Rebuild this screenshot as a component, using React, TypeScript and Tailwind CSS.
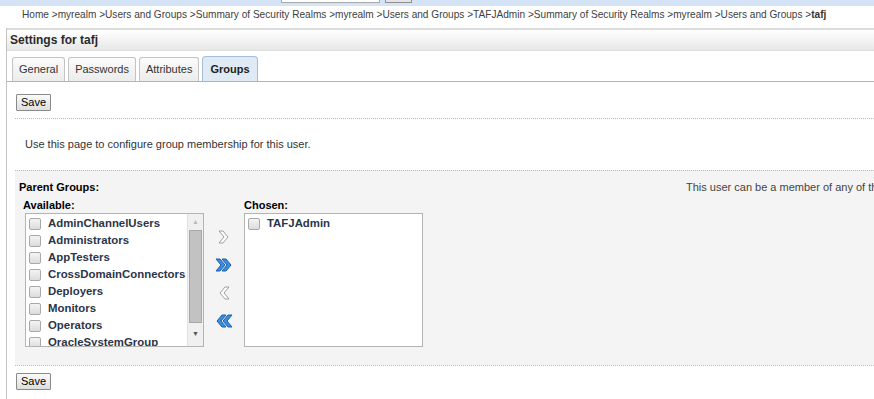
import React from 'react';

const available = [
  'AdminChannelUsers',
  'Administrators',
  'AppTesters',
  'CrossDomainConnectors',
  'Deployers',
  'Monitors',
  'Operators',
  'OracleSystemGroup',
];

const crumbs = [
  'Home', 'myrealm', 'Users and Groups', 'Summary of Security Realms', 'myrealm',
  'Users and Groups', 'TAFJAdmin', 'Summary of Security Realms', 'myrealm', 'Users and Groups',
];

const Check = () => (
  <span className="inline-block w-[12px] h-[12px] rounded-[2px] border border-[#a9a9a9] bg-gradient-to-b from-[#f4f4f4] to-[#dcdcdc] shrink-0" />
);

const Chevron = ({ dir, double }: { dir: 'r' | 'l'; double?: boolean }) => {
  const one = '1,1 5,1 10,7 5,13 1,13 6,7';
  const fill = double ? '#3a8ee0' : '#ffffff';
  const stroke = double ? '#1f5ea8' : '#a0a0a0';
  return (
    <svg width="18" height="14" viewBox="0 0 18 14" className={dir === 'l' ? 'scale-x-[-1]' : ''}>
      {double ? (
        <>
          <polygon points={one} fill={fill} stroke={stroke} strokeWidth="1" strokeLinejoin="round" />
          <polygon points={one} transform="translate(6,0)" fill={fill} stroke={stroke} strokeWidth="1" strokeLinejoin="round" />
        </>
      ) : (
        <polygon points={one} transform="translate(3,0)" fill={fill} stroke={stroke} strokeWidth="1" strokeLinejoin="round" />
      )}
    </svg>
  );
};

const SaveButton = () => (
  <button className="h-[17px] px-[4px] text-[11px] leading-none text-black border border-[#8a8a8a] bg-gradient-to-b from-[#fafafa] to-[#dedede] rounded-[1px]">
    Save
  </button>
);

export default function App() {
  return (
    <div className="w-[874px] h-[399px] overflow-hidden bg-white text-[#333] font-['Liberation_Sans',Arial,sans-serif]">
      {/* top strip */}
      <div className="h-[6px] bg-[#d4e3f5] flex items-start pl-[281px] gap-[5px]">
        <div className="w-[99px] h-[3px] bg-white border-x border-b border-[#a8a8a8]" />
        <div className="w-[27px] h-[3px] bg-[#e4e4e4] border-x border-b border-[#8f8f8f]" />
      </div>

      {/* breadcrumb */}
      <div className="h-[22px] pl-[22px] pt-[3px] text-[10.1px] leading-[12px] text-[#404040] whitespace-nowrap">
        {crumbs.map((c, i) => (
          <span key={i}>{i > 0 ? ' >' : ''}{c}</span>
        ))}
        <span> &gt;</span>
        <span className="font-bold text-[#333]">tafj</span>
      </div>

      <div className="ml-[6px] border-l border-[#c4c4c4] h-full">
        {/* header */}
        <div className="h-[23px] border-t-2 border-[#bfcad1] bg-gradient-to-b from-white to-[#e6e8e6] border-b border-[#dcdcdc] pl-[3px] flex items-center text-[12px] font-bold text-[#2a2a2a]">
          Settings for tafj
        </div>

        {/* tabs */}
        <div className="mt-[6px] pl-[5px] flex items-end gap-[3px] border-b border-[#9fb9d2] h-[25px]">
          {['General', 'Passwords', 'Attributes'].map((t) => (
            <div key={t} className="h-[24px] px-[6px] flex items-center text-[11px] text-[#333] border border-b-0 border-[#c4c4c4] rounded-t-[3px] bg-gradient-to-b from-[#fbfbfb] to-[#ececec]">
              {t}
            </div>
          ))}
          <div className="h-[25px] px-[7px] flex items-center text-[11px] font-bold text-[#222] border border-b-0 border-[#a3bfd8] rounded-t-[4px] bg-[#dfeaf4]">
            Groups
          </div>
        </div>

        <div className="flex pl-[9px] pt-[12px] pb-[7px]">
          <SaveButton />
        </div>
        <div className="ml-[8px] border-t border-dotted border-[#b8b8b8]" />

        <div className="pl-[18px] h-[51px] flex items-center text-[11px] text-[#333]">
          Use this page to configure group membership for this user.
        </div>

        <div className="ml-[8px] border-t border-dotted border-[#b8b8b8] bg-[#f4f4f4] h-[195px] pt-[9px] pl-[4px]">
          <div className="flex justify-between text-[11px] leading-[14px]">
            <span className="font-bold text-black">Parent Groups:</span>
            <span className="text-[#444] whitespace-nowrap w-[188px] overflow-hidden">This user can be a member of any of the groups listed</span>
          </div>

          <div className="flex mt-[4px]">
            <div className="pl-[4px]">
              <div className="text-[11px] font-bold text-black leading-[14px]">Available:</div>
              <div className="mt-[1px] ml-[2px] w-[179px] h-[134px] border border-[#b4b4b4] bg-white flex overflow-hidden">
                <div className="flex-1 pl-[3px] pt-[1px]">
                  {available.map((g) => (
                    <div key={g} className="h-[17px] flex items-center gap-[7px] text-[11.4px] font-bold text-[#2b3548] whitespace-nowrap">
                      <Check />
                      {g}
                    </div>
                  ))}
                </div>
                <div className="w-[16px] bg-[#f0f0f0] border-l border-[#e0e0e0] flex flex-col items-center">
                  <div className="h-[16px] flex items-center justify-center text-[7px] text-[#bbb]">▲</div>
                  <div className="w-[13px] h-[93px] bg-[#c2c2c2] border border-[#a8a8a8]" />
                  <div className="flex-1 flex items-center justify-center text-[7px] text-[#555]">▼</div>
                </div>
              </div>
            </div>

            <div className="w-[40px] pt-[32px] flex flex-col items-center gap-[14px]">
              <Chevron dir="r" />
              <Chevron dir="r" double />
              <Chevron dir="l" />
              <Chevron dir="l" double />
            </div>

            <div>
              <div className="text-[11px] font-bold text-black leading-[14px]">Chosen:</div>
              <div className="mt-[1px] w-[179px] h-[134px] border border-[#b4b4b4] bg-white pl-[3px] pt-[1px]">
                <div className="h-[17px] flex items-center gap-[7px] text-[11.4px] font-bold text-[#2b3548]">
                  <Check />
                  TAFJAdmin
                </div>
              </div>
            </div>
          </div>
        </div>

        <div className="flex ml-[8px] border-t border-dotted border-[#b8b8b8] pl-[1px] pt-[7px]">
          <SaveButton />
        </div>
      </div>
    </div>
  );
}
